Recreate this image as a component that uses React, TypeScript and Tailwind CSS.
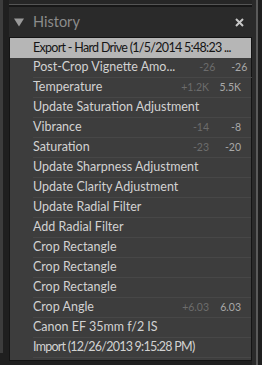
import React from "react";

type Step = { label: string; delta?: string; value?: string; tight?: boolean };

const steps: Step[] = [
  { label: "Export - Hard Drive (1/5/2014 5:48:23 ...", tight: true },
  { label: "Post-Crop Vignette Amo...", delta: "-26", value: "-26" },
  { label: "Temperature", delta: "+1.2K", value: "5.5K" },
  { label: "Update Saturation Adjustment" },
  { label: "Vibrance", delta: "-14", value: "-8" },
  { label: "Saturation", delta: "-23", value: "-20" },
  { label: "Update Sharpness Adjustment" },
  { label: "Update Clarity Adjustment" },
  { label: "Update Radial Filter" },
  { label: "Add Radial Filter" },
  { label: "Crop Rectangle" },
  { label: "Crop Rectangle" },
  { label: "Crop Rectangle" },
  { label: "Crop Angle", delta: "+6.03", value: "6.03" },
  { label: "Canon EF 35mm f/2 IS" },
  { label: "Import (12/26/2013 9:15:28 PM)", tight: true },
];

export default function App() {
  return (
    <div className="w-[262px] h-[365px] bg-[#1f1f1f] flex items-start overflow-hidden font-['Lato',sans-serif]">
      {/* left gutter */}
      <div className="w-[9px] shrink-0 flex flex-col">
        <div className="h-[353px] w-[3px] bg-[#3c3c3c]" />
      </div>

      {/* main column */}
      <div className="w-[243px] shrink-0 flex flex-col">
        {/* top divider */}
        <div className="h-[4px] shrink-0 bg-[#262626]" />
        <div className="h-[1px] shrink-0 bg-[#555555]" />
        <div className="h-[2px] shrink-0 bg-[#171717]" />

        {/* header */}
        <div className="h-[30px] shrink-0 bg-[#2a2a2a] flex items-center pl-[5px] pr-[8px]">
          <svg width="10" height="9" viewBox="0 0 10 9" className="mr-[9px]">
            <polygon points="0,0.5 10,0.5 5,8.5" fill="#9a9a9a" />
          </svg>
          <span className="text-[14.5px] text-[#8c8c8c] leading-none">History</span>
          <svg width="9" height="9" viewBox="0 0 9 9" className="ml-auto">
            <path d="M1 1 L8 8 M8 1 L1 8" stroke="#c8c8c8" strokeWidth="2" />
          </svg>
        </div>

        {/* history list */}
        <div className="shrink-0 border border-[#141414] bg-[#3d3d3d] flex flex-col pb-[2px]">
          {steps.map((s, i) =>
            i === 0 ? (
              <div
                key={i}
                className="h-[20px] shrink-0 bg-[#b6b6b6] flex items-center pl-[23px] text-[12.5px] tracking-[-0.7px] text-[#151515] whitespace-nowrap"
              >
                {s.label}
              </div>
            ) : (
              <div key={i} className="h-[20px] shrink-0 flex items-center pl-[23px]">
                <div className="flex-1 h-full flex items-center border-b border-[#474747] pr-[10px]">
                  <span
                    className={
                      s.tight
                        ? "flex-1 text-[12.5px] tracking-[-0.75px] text-[#d2d2d2] whitespace-nowrap"
                        : "flex-1 text-[12.5px] text-[#d2d2d2] whitespace-nowrap"
                    }
                  >
                    {s.label}
                  </span>
                  {s.delta && (
                    <span className="w-[40px] text-right text-[10.5px] text-[#6c6c6c]">
                      {s.delta}
                    </span>
                  )}
                  {s.value && (
                    <span className="w-[32px] text-right text-[10.5px] text-[#a8a8a8]">
                      {s.value}
                    </span>
                  )}
                </div>
              </div>
            )
          )}
        </div>
      </div>

      {/* right edge */}
      <div className="w-[4px] h-full shrink-0 bg-[#2a2a2a]" />
      <div className="w-[2px] h-full shrink-0 bg-[#5a5a5a]" />
      <div className="w-[4px] h-full shrink-0 bg-[#1f1f1f]" />
    </div>
  );
}
